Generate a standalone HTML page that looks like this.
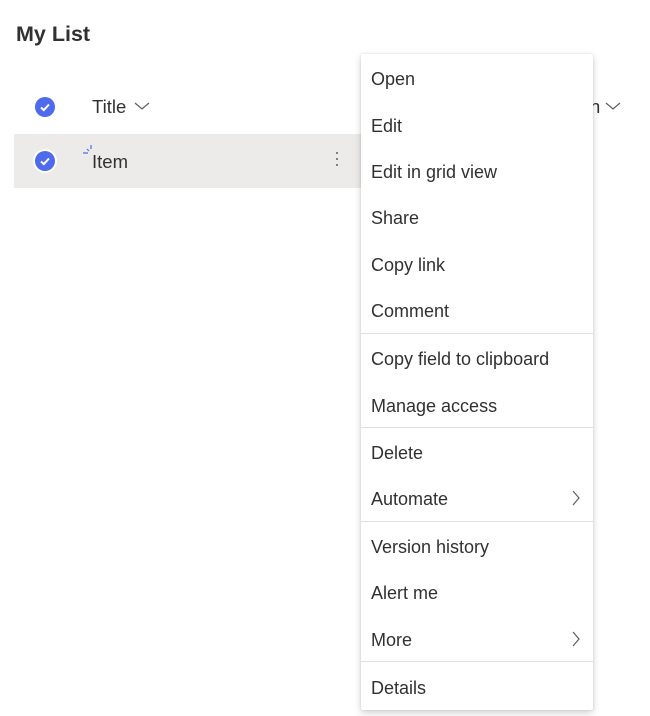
<!DOCTYPE html>
<html><head><style>
body{margin:0;width:650px;height:716px;background:#fff;position:relative;overflow:hidden;font-family:"Liberation Sans",sans-serif;color:#323130}
.a{position:absolute;white-space:nowrap}
.chk{position:absolute;width:20px;height:20px;border-radius:50%;background:#4f6bed}
.chk svg{position:absolute;left:0;top:0}
.menu{position:absolute;left:361px;top:54px;width:232px;height:656px;background:#fff;box-shadow:0 3px 8px rgba(0,0,0,.18),0 0 2px rgba(0,0,0,.12);border-radius:2px}
.mi{position:absolute;left:10px;font-size:18px;color:#323130;line-height:20px}
.div{position:absolute;left:0;width:232px;height:1px;background:#e1dfdd}
.ch{position:absolute;right:12px}
</style></head><body>
<div class="a" style="left:16px;top:22px;font-size:21.5px;font-weight:600;color:#323130">My List</div>
<div class="chk" style="left:35px;top:97px"><svg width="20" height="20"><path d="M6 10.5l2.8 2.6L14 7.5" stroke="#fff" stroke-width="2" fill="none"/></svg></div>
<div class="a" style="left:92px;top:96px;font-size:18.5px">Title</div>
<svg class="a" style="left:134px;top:100px" width="16" height="12"><path d="M1 3l7 6 7-6" stroke="#605e5c" stroke-width="1.2" fill="none"/></svg>
<div class="a" style="left:590px;top:96px;font-size:18.5px">n</div>
<svg class="a" style="left:605px;top:100px" width="16" height="12"><path d="M1 3l7 6 7-6" stroke="#605e5c" stroke-width="1.2" fill="none"/></svg>
<div class="a" style="left:14px;top:134px;width:400px;height:54px;background:#edebe9"></div>
<div class="chk" style="left:35px;top:151px;box-shadow:0 0 0 2px #fff"><svg width="20" height="20"><path d="M6 10.5l2.8 2.6L14 7.5" stroke="#fff" stroke-width="2" fill="none"/></svg></div>
<svg class="a" style="left:82px;top:143px" width="14" height="14"><path d="M1 10h5M5 6l2 2M9 2v4" stroke="#4f6bed" stroke-width="1.2"/></svg>
<div class="a" style="left:92px;top:151px;font-size:18.5px">Item</div>
<div class="a" style="left:336px;top:152px;width:2px;height:2px;background:#605e5c;border-radius:1px;box-shadow:0 6px 0 #605e5c,0 12px 0 #605e5c"></div>
<div class="menu">
<div class="mi" style="top:15px">Open</div>
<div class="mi" style="top:62px">Edit</div>
<div class="mi" style="top:108px">Edit in grid view</div>
<div class="mi" style="top:154px">Share</div>
<div class="mi" style="top:201px">Copy link</div>
<div class="mi" style="top:247px">Comment</div>
<div class="div" style="top:279px"></div>
<div class="mi" style="top:295px">Copy field to clipboard</div>
<div class="mi" style="top:342px">Manage access</div>
<div class="div" style="top:373px"></div>
<div class="mi" style="top:389px">Delete</div>
<div class="mi" style="top:435px">Automate</div>
<svg class="ch" style="top:436px" width="10" height="16"><path d="M2 1l6 7-6 7" stroke="#605e5c" stroke-width="1.2" fill="none"/></svg>
<div class="div" style="top:467px"></div>
<div class="mi" style="top:483px">Version history</div>
<div class="mi" style="top:529px">Alert me</div>
<div class="mi" style="top:576px">More</div>
<svg class="ch" style="top:577px" width="10" height="16"><path d="M2 1l6 7-6 7" stroke="#605e5c" stroke-width="1.2" fill="none"/></svg>
<div class="div" style="top:607px"></div>
<div class="mi" style="top:624px">Details</div>
</div>
</body></html>
